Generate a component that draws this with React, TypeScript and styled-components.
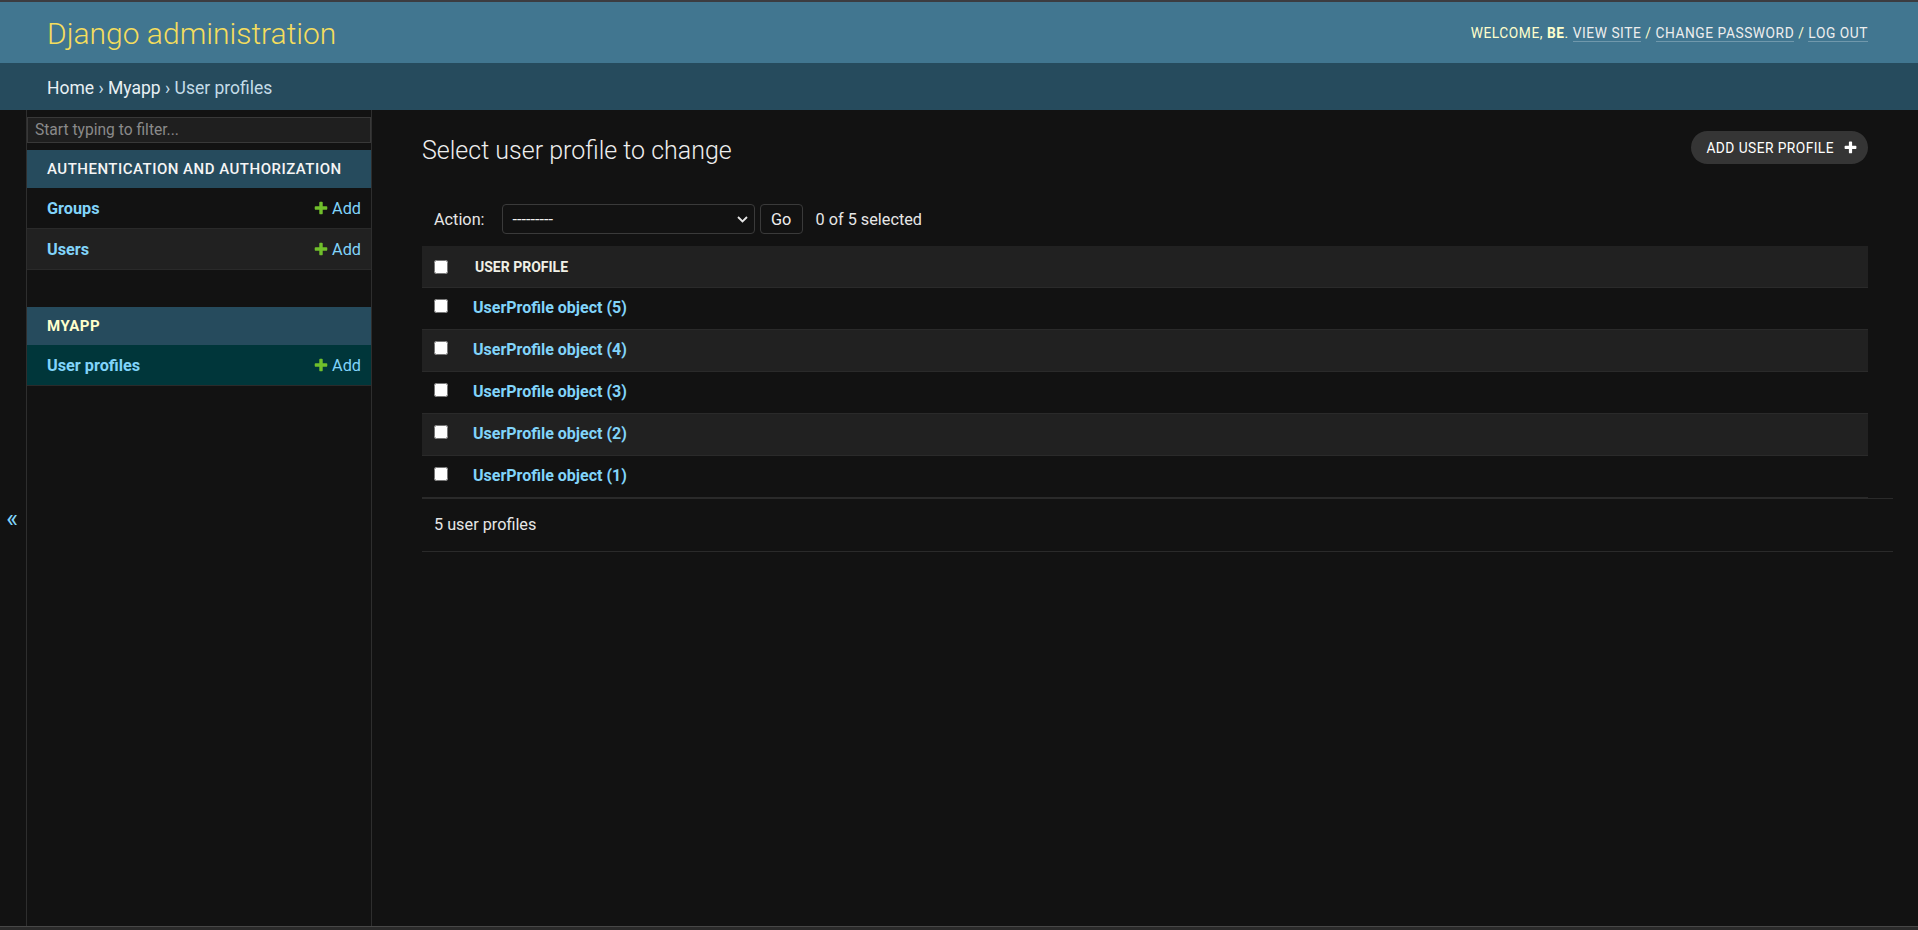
import React from 'react';
import styled, {createGlobalStyle} from 'styled-components';

const GlobalStyle = createGlobalStyle`
  html, body {
    margin: 0;
    padding: 0;
    height: 100%;
  }
  body {
    background: #121212;
    color: #eeeeee;
    font-family: Roboto, "Liberation Sans", Arial, sans-serif;
    overflow: hidden;
  }
  #root {
    height: 100%;
  }
`;

const PLUS_PATH =
  'M1600 796v192q0 40-28 68t-68 28h-416v416q0 40-28 68t-68 28h-192q-40 0-68-28t-28-68v-416h-416q-40 0-68-28t-28-68v-192q0-40 28-68t68-28h416v-416q0-40 28-68t68-28h192q40 0 68 28t28 68v416h416q40 0 68 28t28 68z';

const PlusIcon: React.FC<{color: string; size: number}> = ({color, size}) => (
  <svg width={size} height={size} viewBox="0 0 1792 1792" aria-hidden="true">
    <path fill={color} d={PLUS_PATH}/>
  </svg>
);

const Page = styled.div`
  display: flex;
  flex-direction: column;
  height: 100vh;
  box-sizing: border-box;
  border-top: 2px solid #3c3c40;
`;

const Header = styled.header`
  flex: none;
  display: flex;
  justify-content: space-between;
  align-items: center;
  height: 61px;
  padding: 0 50px 0 47px;
  background: #417690;
`;

const SiteName = styled.h1`
  margin: 2px 0 0;
  font-size: 30px;
  font-weight: 300;
  line-height: 1.2;
  color: #f5dd5d;
`;

const UserTools = styled.div`
  font-size: 13.75px;
  letter-spacing: 0.55px;
  text-transform: uppercase;
  color: #ffffcc;
  margin-top: 1px;

  strong {
    font-weight: 700;
  }
`;

const ToolLink = styled.a`
  color: #eeeeee;
  text-decoration: none;
  border-bottom: 1px solid rgba(255, 255, 255, 0.25);
`;

const Breadcrumbs = styled.nav`
  flex: none;
  display: flex;
  align-items: center;
  height: 47px;
  box-sizing: border-box;
  padding: 3px 50px 0 47px;
  background: #264b5d;
  color: #c4dce8;
  font-size: 17.5px;
`;

const Crumb = styled.a`
  color: #e8f0f4;
  text-decoration: none;
`;

const Main = styled.div`
  flex: 1;
  display: flex;
  min-height: 0;
`;

const SidebarToggle = styled.button`
  flex: none;
  width: 27px;
  box-sizing: border-box;
  display: flex;
  align-items: center;
  justify-content: center;
  padding: 0 2px 0 0;
  border: 0;
  border-right: 1px solid #2e2e2e;
  background: transparent;
  color: #81d4fa;
  font-family: Roboto, sans-serif;
  font-size: 25px;
`;

const Sidebar = styled.nav`
  flex: none;
  width: 345px;
  box-sizing: border-box;
  border-right: 1px solid #2e2e2e;
`;

const NavFilter = styled.input`
  display: block;
  width: 100%;
  height: 26px;
  box-sizing: border-box;
  margin: 7px 0;
  padding: 2px 7px;
  border: 1px solid #383838;
  background: #1f1f1f;
  color: #eeeeee;
  font-family: Roboto, sans-serif;
  font-size: 15.6px;
  outline: none;

  &::placeholder {
    color: #8a8a8a;
  }
`;

const AppModule = styled.div`
  margin-bottom: 37px;
`;

const AppCaption = styled.div<{$current?: boolean}>`
  display: flex;
  align-items: center;
  height: 38px;
  padding-left: 20px;
  background: #264b5d;
  color: ${p => (p.$current ? '#ffffcc' : '#f5f5f5')};
  font-size: 15px;
  font-weight: ${p => (p.$current ? 700 : 500)};
  letter-spacing: 0.5px;
  text-transform: uppercase;
`;

const ModelRow = styled.div<{$tone: 'plain' | 'alt' | 'current'}>`
  display: flex;
  align-items: center;
  justify-content: space-between;
  height: 41px;
  box-sizing: border-box;
  padding: 0 10px 0 20px;
  border-bottom: 1px solid #2a2a2a;
  background: ${p => (p.$tone === 'alt' ? '#212121' : p.$tone === 'current' ? '#00363a' : 'transparent')};
`;

const ModelLink = styled.a`
  color: #81d4fa;
  font-size: 16.25px;
  font-weight: 700;
  text-decoration: none;
`;

const AddLink = styled.a`
  display: flex;
  align-items: center;
  gap: 3px;
  color: #81d4fa;
  font-size: 16.25px;
  text-decoration: none;
`;

const Content = styled.main`
  flex: 1;
  min-width: 0;
  padding: 21px 50px 0;
`;

const TitleRow = styled.div`
  display: flex;
  justify-content: space-between;
  align-items: flex-start;
  margin-bottom: 24px;
`;

const PageTitle = styled.h1`
  margin: 5px 0 0;
  font-size: 25px;
  font-weight: 300;
  line-height: 30px;
  color: #eeeeee;
`;

const ObjectToolButton = styled.a`
  display: inline-flex;
  align-items: center;
  gap: 9px;
  height: 33px;
  box-sizing: border-box;
  padding: 0 10px 0 15px;
  border-radius: 17px;
  background: #353535;
  color: #ffffff;
  font-size: 13.75px;
  letter-spacing: 0.45px;
  text-transform: uppercase;
  text-decoration: none;
`;

const ActionsBar = styled.div`
  display: flex;
  align-items: center;
  padding: 14px 12px 12px;
  color: #e6e6e6;
  font-size: 16.25px;
`;

const ActionLabel = styled.span`
  margin-right: 17px;
`;

const SelectBox = styled.div`
  display: flex;
  align-items: center;
  justify-content: space-between;
  width: 253px;
  height: 30px;
  box-sizing: border-box;
  padding: 0 6px 0 10px;
  border: 1px solid #3a3a3a;
  border-radius: 4px;
  color: #eeeeee;
`;

const GoButton = styled.button`
  width: 43px;
  height: 30px;
  margin-left: 5px;
  border: 1px solid #3a3a3a;
  border-radius: 4px;
  background: #121212;
  color: #eeeeee;
  font-family: Roboto, sans-serif;
  font-size: 16.25px;
`;

const Counter = styled.span`
  margin-left: 13px;
`;

const ResultTable = styled.table`
  width: 100%;
  border-collapse: separate;
  border-spacing: 0;

  tbody tr:nth-child(even) {
    background: #212121;
  }
`;

const HeadCell = styled.th<{$check?: boolean}>`
  height: 42px;
  box-sizing: border-box;
  padding: 0 0 0 ${p => (p.$check ? '12px' : '2px')};
  width: ${p => (p.$check ? '51px' : 'auto')};
  background: #212121;
  border-bottom: 1px solid #2a2a2a;
  text-align: left;
  vertical-align: middle;
  color: #f0f0e6;
  font-size: 14px;
  font-weight: 700;
  text-transform: uppercase;
`;

const Cell = styled.td<{$check?: boolean}>`
  height: 42px;
  box-sizing: border-box;
  padding: 10px 0 0 ${p => (p.$check ? '12px' : '0')};
  border-bottom: 1px solid #2a2a2a;
  vertical-align: top;
  line-height: 20px;
`;

const RowCheck = styled.input<{$head?: boolean}>`
  display: block;
  width: 14px;
  height: 14px;
  margin: ${p => (p.$head ? '0' : '1px 0 0')};
`;

const ResultLink = styled.a`
  color: #81d4fa;
  font-size: 16px;
  font-weight: 700;
  text-decoration: none;
`;

const Paginator = styled.p`
  width: calc(100% + 25px);
  box-sizing: border-box;
  margin: 0;
  padding: 12px 12px;
  line-height: 28px;
  border-top: 1px solid #2a2a2a;
  border-bottom: 1px solid #2a2a2a;
  color: #e6e6e6;
  font-size: 16.25px;
`;

const TaskStrip = styled.div`
  flex: none;
  height: 3px;
  border-top: 1px solid #474747;
  background: #2a2a2a;
`;

const apps = [
  {
    name: 'Authentication and Authorization',
    models: ['Groups', 'Users'],
  },
  {
    name: 'Myapp',
    models: ['User profiles'],
    current: true,
  },
];

const profiles = [5, 4, 3, 2, 1];

export default function App() {
  return (
    <>
      <GlobalStyle/>
      <Page>
        <Header>
          <SiteName>Django administration</SiteName>
          <UserTools>
            Welcome, <strong>BE</strong>. <ToolLink href="#">View site</ToolLink> /{' '}
            <ToolLink href="#">Change password</ToolLink> / <ToolLink href="#">Log out</ToolLink>
          </UserTools>
        </Header>
        <Breadcrumbs>
          <Crumb href="#">Home</Crumb>&nbsp;›&nbsp;<Crumb href="#">Myapp</Crumb>&nbsp;›&nbsp;User profiles
        </Breadcrumbs>
        <Main>
          <SidebarToggle>«</SidebarToggle>
          <Sidebar>
            <NavFilter placeholder="Start typing to filter..."/>
            {apps.map(app => (
              <AppModule key={app.name}>
                <AppCaption $current={app.current}>{app.name}</AppCaption>
                {app.models.map((model, i) => (
                  <ModelRow key={model} $tone={app.current ? 'current' : i % 2 ? 'alt' : 'plain'}>
                    <ModelLink href="#">{model}</ModelLink>
                    <AddLink href="#"><PlusIcon color="#70bf2b" size={16}/>Add</AddLink>
                  </ModelRow>
                ))}
              </AppModule>
            ))}
          </Sidebar>
          <Content>
            <TitleRow>
              <PageTitle>Select user profile to change</PageTitle>
              <ObjectToolButton href="#">
                Add user profile
                <PlusIcon color="#ffffff" size={15}/>
              </ObjectToolButton>
            </TitleRow>
            <ActionsBar>
              <ActionLabel>Action:</ActionLabel>
              <SelectBox>
                <span>---------</span>
                <svg width="11" height="7" viewBox="0 0 11 7" aria-hidden="true">
                  <path d="M1 1l4.5 4.5L10 1" fill="none" stroke="#e6e6e6" strokeWidth="1.8"/>
                </svg>
              </SelectBox>
              <GoButton>Go</GoButton>
              <Counter>0 of 5 selected</Counter>
            </ActionsBar>
            <ResultTable>
              <thead>
                <tr>
                  <HeadCell $check><RowCheck type="checkbox" $head/></HeadCell>
                  <HeadCell>User profile</HeadCell>
                </tr>
              </thead>
              <tbody>
                {profiles.map(n => (
                  <tr key={n}>
                    <Cell $check><RowCheck type="checkbox"/></Cell>
                    <Cell><ResultLink href="#">UserProfile object ({n})</ResultLink></Cell>
                  </tr>
                ))}
              </tbody>
            </ResultTable>
            <Paginator>5 user profiles</Paginator>
          </Content>
        </Main>
        <TaskStrip/>
      </Page>
    </>
  );
}
